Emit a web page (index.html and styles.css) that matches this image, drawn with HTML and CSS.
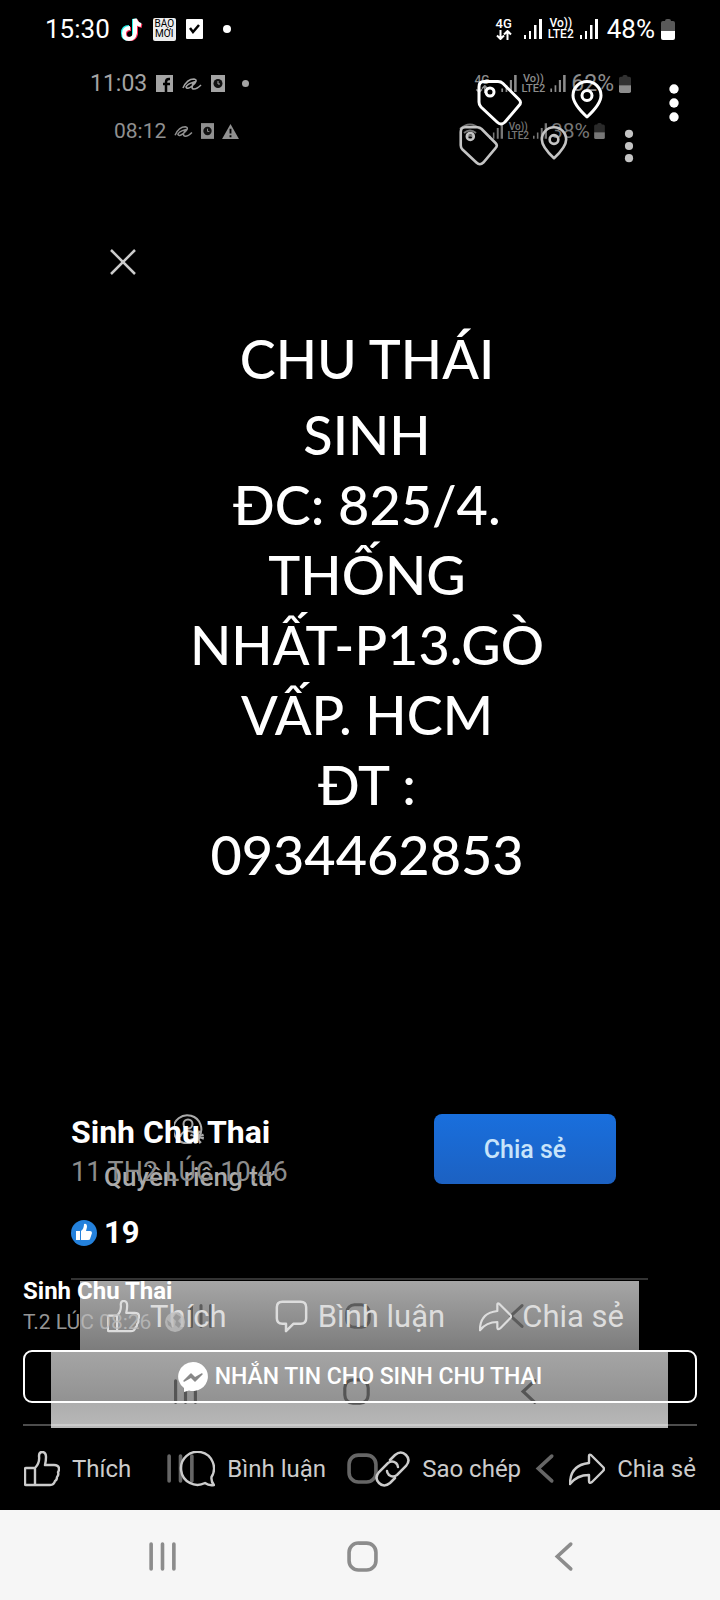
FILE: index.html
```
<!DOCTYPE html>
<html lang="vi">
<head>
    <meta charset="UTF-8">
    <meta name="viewport" content="width=device-width, initial-scale=1.0">
    <title>Sinh Chu Thai</title>
    <link rel="stylesheet" href="styles.css">
</head>
<body>
    <svg class="sprite" aria-hidden="true">
        <symbol id="signal" viewBox="0 0 18 20">
            <path d="M0 16h2v4H0zM5 12h2v8H5zM10 6h2.500v14H10zM15 0h3v20h-3z" fill="currentColor"/>
        </symbol>
        <symbol id="updown" viewBox="0 0 16 10">
            <path d="M4.500 0v9M1 5.500l3.500 3.500L8 5.500M11.500 10V1M8 4.500L11.500 1 15 4.500" fill="none" stroke="currentColor" stroke-width="2"/>
        </symbol>
        <symbol id="battery" viewBox="0 0 14 21">
            <path d="M2 2h2q0-2 2-2h2q2 0 2 2h2q2 0 2 2v8H0V4q0-2 2-2z" fill="currentColor" opacity=".35"/>
            <path d="M0 12h14v7q0 2-2 2H2q-2 0-2-2z" fill="currentColor"/>
        </symbol>
        <symbol id="tag" viewBox="0 0 46 46">
            <path d="M7 1.500h14q3 0 5 2l16 16q3 3 0 6L28 42q-4 4-8 0L4 27q-2-2-2-5V7q0-5.500 5-5.500z" fill="none" stroke="currentColor" stroke-width="3"/>
            <circle cx="13" cy="12" r="4" fill="none" stroke="currentColor" stroke-width="3"/>
        </symbol>
        <symbol id="pin" viewBox="0 0 46 46">
            <path d="M23 37Q9 24 9 15.500a14 14 0 0 1 28 0Q37 24 23 37z" fill="none" stroke="currentColor" stroke-width="3" stroke-linejoin="round"/>
            <circle cx="23" cy="15.500" r="5" fill="none" stroke="currentColor" stroke-width="3"/>
        </symbol>
        <symbol id="dots" viewBox="0 0 46 46">
            <g fill="currentColor"><circle cx="23" cy="9" r="4.700"/><circle cx="23" cy="23" r="4.700"/><circle cx="23" cy="37" r="4.700"/></g>
        </symbol>
        <symbol id="ali" viewBox="0 0 20 16">
            <path d="M1 12Q5 3 12 3q5 1-2 7-5 4-6 1 1-3 8-5-4 7 0 7 3 0 7-4" fill="none" stroke="currentColor" stroke-width="1.600"/>
        </symbol>
        <symbol id="watch" viewBox="0 0 14 17">
            <path d="M0 0h14v17H0z" fill="currentColor"/>
            <circle cx="7" cy="8.500" r="4.500" fill="#111"/>
            <path d="M7 6v3h2" fill="none" stroke="currentColor"/>
        </symbol>
        <symbol id="thumb" viewBox="0 0 36 36">
            <path d="M2 17h9v17H2q-1 0-1-1V18q0-1 1-1zM11 17q5-5 4-12 0-4 3-4 4 0 4 5 0 4-1 8h9q5 0 5 4 0 2-1 3 1 3-1 5 0 3-2 4-1 4-5 4H11" fill="none" stroke="currentColor" stroke-width="2.400" stroke-linejoin="round"/>
        </symbol>
        <symbol id="round-chat" viewBox="0 0 36 36">
            <path d="M32.500 26a16.500 16.500 0 1 0-6.500 6q4 3 9 2-3-3-2.500-8z" fill="none" stroke="currentColor" stroke-width="2.400" stroke-linejoin="round"/>
        </symbol>
        <symbol id="bubble" viewBox="0 0 36 36">
            <path d="M8 2h20q6 0 6 6v12q0 6-6 6h-8l-8 8v-8H8q-6 0-6-6V8q0-6 6-6z" fill="none" stroke="currentColor" stroke-width="2.700" stroke-linejoin="round"/>
        </symbol>
        <symbol id="link" viewBox="0 0 36 36">
            <g fill="none" stroke="currentColor" stroke-width="2.500" stroke-linecap="round">
                <path d="M16 9l5-5q6-5 11 0t0 11l-9 9q-4 3-8 0-2-2-2-4"/>
                <path d="M21 27l-5 5q-6 5-11 0t0-11l9-9q4-3 8 0 2 2 2 4"/>
            </g>
        </symbol>
        <symbol id="share" viewBox="0 0 36 36">
            <path d="M20 5q0-2 2-1l12 12q2 2 0 4L23 31q-3 2-3-1v-6Q8 24 1 33q0-19 19-21z" fill="none" stroke="currentColor" stroke-width="2.400" stroke-linejoin="round"/>
        </symbol>
        <symbol id="recents" viewBox="0 0 30 30">
            <path d="M4 3v24M15 3v24M26 3v24" stroke="currentColor" stroke-width="3.500" stroke-linecap="round"/>
        </symbol>
        <symbol id="home" viewBox="0 0 30 30">
            <rect x="2" y="2" width="26" height="26" rx="9" fill="none" stroke="currentColor" stroke-width="3.500"/>
        </symbol>
        <symbol id="back" viewBox="0 0 30 30">
            <path d="M22 3L9 15l13 12" fill="none" stroke="currentColor" stroke-width="3.500" stroke-linecap="round"/>
        </symbol>
    </svg>

    <div class="screen">
        <!-- oldest screenshot -->
        <div class="layer inner">
            <div class="status">
                <span>08:12</span>
                <svg class="ali"><use href="#ali"/></svg>
                <svg class="watch"><use href="#watch"/></svg>
                <svg class="warn" viewBox="0 0 18 16"><path d="M9 0l9 16H0z" fill="currentColor"/><path d="M9 5v5M9 12v2" stroke="#000" stroke-width="2"/></svg>
                <div class="status-right">
                    <svg class="wifi" viewBox="0 0 22 16"><path d="M1 6q10-9 20 0M5 10q6-5 12 0M8 14q3-3 6 0" fill="none" stroke="currentColor" stroke-width="2"/></svg>
                    <svg class="signal"><use href="#signal"/></svg>
                    <span class="volte">Vo))<br>LTE2</span>
                    <svg class="signal"><use href="#signal"/></svg>
                    <span>38%</span>
                    <svg class="battery"><use href="#battery"/></svg>
                </div>
            </div>
            <button class="close" aria-label="Đóng">
                <svg viewBox="0 0 26 26"><path d="M1 1l24 24M25 1L1 25" stroke="currentColor" stroke-width="2.500"/></svg>
            </button>
            <div class="post">
                <p>CHU THÁI</p>
                <p>SINH<br>ĐC: 825/4.<br>THỐNG<br>NHẤT-P13.GÒ<br>VẤP. HCM<br>ĐT :<br>0934462853</p>
            </div>
            <div class="share-row">
                <div class="privacy">
                    <svg viewBox="0 0 30 30">
                        <g fill="none" stroke="currentColor" stroke-width="2">
                            <path d="M25 23a14 14 0 1 0-7 5.500"/>
                            <circle cx="14" cy="10" r="4.500"/>
                            <path d="M6 23q2-6 8-6 4 0 6 2"/>
                        </g>
                        <circle cx="23" cy="23" r="5" fill="none" stroke="currentColor" stroke-width="4" stroke-dasharray="2 2"/>
                        <circle cx="23" cy="23" r="3.500" fill="currentColor"/>
                    </svg>
                    <span>Quyền riêng tư</span>
                </div>
                <button class="share-btn">Chia sẻ</button>
            </div>
            <div class="nav">
                <svg><use href="#recents"/></svg>
                <svg><use href="#home"/></svg>
                <svg><use href="#back"/></svg>
            </div>
        </div>

        <!-- screenshot of the screenshot -->
        <div class="layer middle">
            <div class="status">
                <span>11:03</span>
                <svg class="fb" viewBox="0 0 17 17"><path d="M0 0h17v17H0z" fill="currentColor"/><path d="M10 17V7q0-3 3-3h1M7 9h7" fill="none" stroke="#000" stroke-width="2.500"/></svg>
                <svg class="ali"><use href="#ali"/></svg>
                <svg class="watch"><use href="#watch"/></svg>
                <i class="dot"></i>
                <div class="status-right">
                    <span class="net">4G<svg><use href="#updown"/></svg></span>
                    <svg class="signal"><use href="#signal"/></svg>
                    <span class="volte">Vo))<br>LTE2</span>
                    <svg class="signal"><use href="#signal"/></svg>
                    <span>62%</span>
                    <svg class="battery"><use href="#battery"/></svg>
                </div>
            </div>
            <div class="toolbar">
                <button aria-label="Gắn thẻ"><svg><use href="#tag"/></svg></button>
                <button aria-label="Vị trí"><svg><use href="#pin"/></svg></button>
                <button aria-label="Thêm"><svg><use href="#dots"/></svg></button>
            </div>
            <div class="info">
                <h2>Sinh Chu Thai</h2>
                <p class="date">11 TH2 LÚC 10:46</p>
                <p class="likes">
                    <svg viewBox="0 0 26 26"><circle cx="13" cy="13" r="13" fill="#2481dc"/><path d="M5 11h4v9H5zM10 11q3-2 3-7 3-1 3 3l-1 4h4q2 0 2 2l-2 6q0 1-2 1h-7z" fill="#fff"/></svg>
                    19
                </p>
            </div>
            <div class="actions">
                <button><svg><use href="#thumb"/></svg>Thích</button>
                <button><svg><use href="#bubble"/></svg>Bình luận</button>
                <button><svg><use href="#share"/></svg>Chia sẻ</button>
            </div>
            <div class="nav">
                <svg><use href="#recents"/></svg>
                <svg><use href="#home"/></svg>
                <svg><use href="#back"/></svg>
            </div>
        </div>

        <div class="layer faded">
            <div class="nav">
                <svg><use href="#recents"/></svg>
                <svg><use href="#home"/></svg>
                <svg><use href="#back"/></svg>
            </div>
        </div>

        <!-- current screen -->
        <div class="layer front">
            <div class="status">
                <span>15:30</span>
                <svg class="app" viewBox="0 0 23 23">
                    <g fill="none" stroke-width="4">
                        <path d="M9 9q-6 0-6 6t6 6 5-6V1q1 5 6 6" stroke="#25f4ee"/>
                        <path d="M11 11q-6 0-6 5t5 5 6-5V2q1 5 6 6" stroke="#fe2c55"/>
                        <path d="M10 10q-6 0-6 5.500t5 5.500 6-6V1q1 5 6 6" stroke="#fff"/>
                    </g>
                </svg>
                <span class="baomoi">BÁO<br>MỚI</span>
                <svg class="check" viewBox="0 0 17 20"><rect width="17" height="20" rx="1" fill="currentColor"/><path d="M4 9l3 4 6-7" fill="none" stroke="#000" stroke-width="2.500"/></svg>
                <i class="dot"></i>
                <div class="status-right">
                    <span class="net">4G<svg><use href="#updown"/></svg></span>
                    <svg class="signal"><use href="#signal"/></svg>
                    <span class="volte">Vo))<br>LTE2</span>
                    <svg class="signal"><use href="#signal"/></svg>
                    <span class="percent">48%</span>
                    <svg class="battery"><use href="#battery"/></svg>
                </div>
            </div>
            <div class="toolbar">
                <button aria-label="Gắn thẻ"><svg><use href="#tag"/></svg></button>
                <button aria-label="Vị trí"><svg><use href="#pin"/></svg></button>
                <button aria-label="Thêm"><svg><use href="#dots"/></svg></button>
            </div>
            <div class="info">
                <h1>Sinh Chu Thai</h1>
                <p class="date">T.2 LÚC 08:26
                    <svg viewBox="0 0 20 20"><circle cx="10" cy="10" r="10" fill="currentColor"/><path d="M11 2l5 3-3 4 3 3-2 4-4-3 1-4-3-3zM2 8l4 3 1 5-4-3z" fill="#999"/></svg>
                </p>
                <button class="message">
                    <svg viewBox="0 0 30 30"><path d="M15 0a15 14.500 0 1 1-4 28.500L6 30v-4A15 14.500 0 0 1 15 0z" fill="#fff"/><path d="M6 19l7-7 4 4 7-4-7 7-4-4z" fill="#888" stroke="#888" stroke-width="1.500" stroke-linejoin="round"/></svg>
                    NHẮN TIN CHO SINH CHU THAI
                </button>
            </div>
            <div class="actions">
                <button><svg><use href="#thumb"/></svg>Thích</button>
                <button><svg><use href="#round-chat"/></svg>Bình luận</button>
                <button><svg><use href="#link"/></svg>Sao chép</button>
                <button><svg><use href="#share"/></svg>Chia sẻ</button>
            </div>
            <div class="nav">
                <svg><use href="#recents"/></svg>
                <svg><use href="#home"/></svg>
                <svg><use href="#back"/></svg>
            </div>
        </div>
    </div>
</body>
</html>
```
FILE: styles.css
```
* {
    box-sizing: border-box;
}
body {
    margin: 0;
    background-color: #000;
    color: #fff;
    font-family: Roboto, "Noto Sans", sans-serif;
}
h1, h2, p {
    margin: 0;
}
button {
    padding: 0;
    border: none;
    background: none;
    color: inherit;
    font-family: inherit;
    cursor: pointer;
}
svg {
    display: block;
    flex-shrink: 0;
}
.sprite {
    position: absolute;
    width: 0;
    height: 0;
}
/* all layers share one grid cell */
.screen {
    display: grid;
    min-height: 100vh;
}
.layer {
    grid-area: 1 / 1;
    display: flex;
    flex-direction: column;
    min-width: 0;
}

/* status bar */
.status, .status-right {
    display: flex;
    align-items: center;
}
.status-right {
    margin-left: auto;
    gap: 6px;
}
.volte {
    font-weight: 500;
    text-align: center;
}
.net {
    display: flex;
    flex-direction: column;
    align-items: center;
    margin-right: 6px;
    font-weight: 500;
}
.dot {
    border-radius: 50%;
    background-color: currentColor;
}
.toolbar {
    display: flex;
    justify-content: flex-end;
}
.toolbar svg {
    width: 100%;
    height: 100%;
}
.actions button {
    display: flex;
    align-items: center;
}
.nav {
    display: grid;
    grid-template-columns: repeat(3, 1fr);
    place-items: center;
}

/* inner */
.inner {
    padding: 115px 0 250px;
}
.inner .status {
    height: 32px;
    padding: 0 115px 0 114px;
    gap: 8px;
    font-size: 21px;
    color: #909090;
}
.inner .status-right {
    gap: 4px;
    color: #777;
}
.inner .ali {
    width: 19px;
    height: 15px;
}
.inner .watch {
    width: 13px;
    height: 16px;
}
.inner .warn {
    width: 17px;
    height: 15px;
}
.inner .wifi {
    width: 22px;
    height: 16px;
    margin-right: 4px;
}
.inner .signal {
    width: 14px;
    height: 16px;
}
.inner .volte {
    font-size: 10px;
    line-height: 9px;
}
.inner .battery {
    width: 11px;
    height: 16px;
}
.close {
    width: 26px;
    height: 26px;
    margin: 102px 0 0 110px;
    color: #ccc;
}
.post {
    margin-top: 49px;
    padding-left: 14px;
    font-family: Lato, "Noto Sans", sans-serif;
    font-size: 54px;
    font-weight: 500;
    line-height: 70px;
    text-align: center;
}
.post p:first-child {
    margin-bottom: 6px;
}
.share-row {
    display: flex;
    justify-content: space-between;
    align-items: flex-start;
    margin-top: auto;
    padding: 0 104px;
}
.privacy {
    display: flex;
    flex-direction: column;
    align-items: center;
    gap: 20px;
    font-size: 26px;
    font-weight: 500;
    line-height: 26px;
    color: #aaa;
}
.privacy svg {
    width: 30px;
    height: 30px;
}
.share-btn {
    width: 182px;
    height: 70px;
    border-radius: 8px;
    background: linear-gradient(#196fdd, #1c61c2);
    color: #c8e4fa;
    font-size: 25px;
    font-weight: 500;
}
.inner .nav {
    height: 69px;
    margin: 91px 81px 0 80px;
    padding: 0 44px 0 42px;
    background: linear-gradient(#a6a6a6, #7c7c7c);
    color: #5c5c5c;
}
.inner .nav svg {
    width: 26px;
    height: 26px;
}

/* middle */
.middle {
    padding: 67px 0 172px;
}
.middle .status {
    height: 33px;
    padding: 0 89px 0 90px;
    gap: 9px;
    font-size: 23px;
    color: #a4a4a4;
}
.middle .status-right {
    gap: 5px;
    color: #8c8c8c;
}
.middle .fb {
    width: 17px;
    height: 17px;
}
.middle .ali {
    width: 20px;
    height: 16px;
}
.middle .watch {
    width: 14px;
    height: 17px;
}
.middle .dot {
    width: 7px;
    height: 7px;
    margin-left: 8px;
}
.middle .net {
    font-size: 12px;
    line-height: 10px;
}
.middle .net svg {
    width: 14px;
    height: 8px;
}
.middle .signal {
    width: 16px;
    height: 17px;
}
.middle .volte {
    font-size: 11px;
    line-height: 10px;
}
.middle .battery {
    width: 12px;
    height: 18px;
}
.middle .toolbar {
    gap: 35px;
    margin-top: 26px;
    padding-right: 71px;
    color: #c4c4c4;
}
.middle .toolbar button {
    width: 40px;
    height: 40px;
}
.middle .info {
    margin: auto 72px 0 71px;
    padding-bottom: 27px;
    border-bottom: 2px solid #333;
}
.middle h2 {
    font-size: 32px;
    font-weight: 700;
    line-height: 36px;
}
.middle .date {
    margin-top: 6px;
    font-size: 27px;
    line-height: 32px;
    color: #8c8c8c;
}
.likes {
    display: flex;
    align-items: center;
    gap: 7px;
    margin-top: 27px;
    font-size: 31px;
    font-weight: 700;
    line-height: 36px;
}
.likes svg {
    width: 26px;
    height: 26px;
}
.middle .actions {
    display: grid;
    grid-template-columns: 168fr 205fr 144fr;
    height: 71px;
    padding: 2px 96px 0 107px;
    color: #ddd;
}
.middle .actions button {
    gap: 10px;
    font-size: 31px;
    white-space: nowrap;
}
.middle .actions svg {
    width: 33px;
    height: 33px;
}
.middle .nav {
    height: 77px;
    margin: 0 52px 0 51px;
    padding: 4px 54px 0 49px;
    background: linear-gradient(#a5a5a5, #929292 65%, #adadad 66%, #b8b8b8);
    color: #555;
}
.middle .nav svg {
    width: 27px;
    height: 27px;
}

/* faded navigation bar */
.faded {
    justify-content: flex-end;
    padding-bottom: 90px;
}
.faded .nav {
    height: 84px;
    padding: 0 84px 0 89px;
    color: #666;
}
.faded .nav svg {
    width: 31px;
    height: 31px;
}

/* front */
.front .status {
    height: 58px;
    padding: 0 45px;
    gap: 10px;
    font-size: 26px;
}
.front .app {
    width: 23px;
    height: 23px;
}
.baomoi {
    width: 23px;
    height: 23px;
    padding-top: 1px;
    border-radius: 2px;
    background-color: #eee;
    color: #000;
    font-size: 10px;
    line-height: 10px;
    text-align: center;
}
.front .check {
    width: 17px;
    height: 20px;
}
.front .dot {
    width: 8px;
    height: 8px;
    margin-left: 10px;
}
.front .net {
    font-size: 13px;
    line-height: 12px;
}
.front .net svg {
    width: 16px;
    height: 10px;
}
.front .signal {
    width: 18px;
    height: 20px;
}
.front .volte {
    font-size: 12px;
    line-height: 11px;
}
.percent {
    padding-left: 3px;
}
.front .battery {
    width: 14px;
    height: 21px;
}
.front .toolbar {
    gap: 41px;
    margin-top: 22px;
    padding-right: 23px;
}
.front .toolbar button {
    width: 46px;
    height: 46px;
}
.front .info {
    margin: auto 23px 0;
    padding-bottom: 21px;
    border-bottom: 2px solid rgba(255, 255, 255, 0.3);
}
.front h1 {
    font-size: 24px;
    font-weight: 700;
    line-height: 28px;
}
.front .date {
    display: flex;
    align-items: center;
    gap: 14px;
    margin-top: 4px;
    font-size: 21px;
    line-height: 26px;
    color: rgba(190, 190, 190, 0.8);
}
.front .date svg {
    width: 20px;
    height: 20px;
}
.message {
    display: flex;
    align-items: center;
    justify-content: center;
    gap: 7px;
    width: 100%;
    height: 53px;
    margin-top: 15px;
    border: 2px solid #fff;
    border-radius: 9px;
    font-size: 23px;
    font-weight: 500;
}
.message svg {
    width: 30px;
    height: 30px;
}
.front .actions {
    display: flex;
    justify-content: space-between;
    height: 84px;
    padding: 1px 24px 0;
    color: #ccc;
}
.front .actions button {
    gap: 12px;
    font-size: 24px;
}
.front .actions svg {
    width: 36px;
    height: 36px;
}
.front .nav {
    height: 90px;
    padding: 2px 56px 0 62px;
    background-color: #f6f6f6;
    color: #8c8c8c;
}
.front .nav svg {
    width: 31px;
    height: 31px;
}
```
